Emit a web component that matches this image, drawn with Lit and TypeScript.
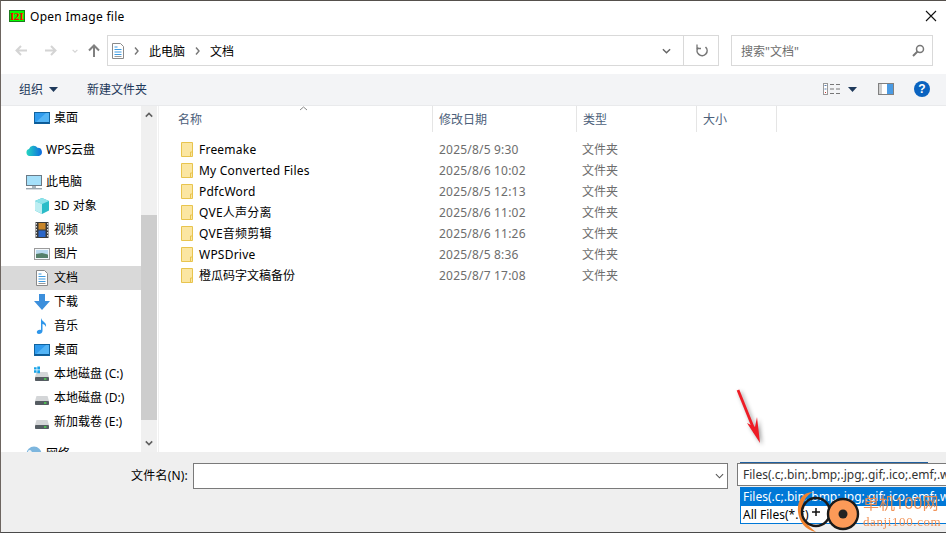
import { LitElement, html, css, svg } from "lit";
import { customElement } from "lit/decorators.js";

const icon = (body: unknown, w = 18, h = 18, cls = "") =>
  html`<svg class=${cls} width=${w} height=${h} viewBox="0 0 ${w} ${h}">${body}</svg>`;

const desktop = svg`<rect x="1.5" y="3.5" width="15" height="11" fill="#2f9bee" stroke="#10639f"/><path d="M2 14 L13 4 H16 V14Z" fill="#53b4f5"/><rect x="2" y="13" width="14" height="1.5" fill="#0c5a96"/>`;
const cloud = svg`<defs><linearGradient id="wg" x1="0" x2="1"><stop offset="0" stop-color="#25d6c0"/><stop offset="1" stop-color="#0e6be0"/></linearGradient></defs><path d="M4.5 15 A3.6 3.6 0 0 1 4 8 A4.8 4.8 0 0 1 12.5 6.8 A4.2 4.2 0 0 1 14 15Z" fill="url(#wg)"/>`;
const pc = svg`<rect x="1.5" y="2.5" width="15" height="10" fill="#7fd0f7" stroke="#6b7a86"/><rect x="2" y="3" width="14" height="9" fill="#a5e0fa"/><rect x="7" y="13" width="4" height="2" fill="#a8b4bc"/><rect x="1" y="15" width="16" height="1.4" fill="#9aa6ae"/>`;
const cube = svg`<path d="M9 1 L16 4 V13.5 L9 17 L2 13.5 V4Z" fill="#2cbcc8"/><path d="M9 1 L16 4 L9 7 L2 4Z" fill="#8fe3ea"/><path d="M2 4 L9 7 V17 L2 13.5Z" fill="#bdeef2"/>`;
const film = svg`<rect x="2.5" y="1" width="13" height="16" fill="#3a3a3a"/><rect x="5.5" y="2" width="7" height="6.5" fill="#c8862a"/><rect x="5.5" y="9.5" width="7" height="6.5" fill="#2a66c8"/><path d="M3.4 2v14M14.6 2v14" stroke="#ddd" stroke-dasharray="1.5 1.5" stroke-width="1.2"/>`;
const picture = svg`<rect x="1.5" y="3.5" width="15" height="11" fill="#f4f8fb" stroke="#9b9b9b"/><rect x="3" y="5" width="12" height="4" fill="#b9d9ee"/><path d="M3 9 L9 8 L15 9.5 V13 H3Z" fill="#55806a"/>`;
const doc = svg`<path d="M3.5 1.5 H11.5 L14.5 4.5 V16.5 H3.5Z" fill="#fff" stroke="#8a8a8a"/><path d="M5.5 5h3M5.5 7.5h7M5.5 10h7M5.5 12.5h7" stroke="#3d9ae0" stroke-width="1"/><path d="M5.5 14.5h7" stroke="#999"/>`;
const down = svg`<path d="M6 1 H12 V8 H17 L9 17 L1 8 H6Z" fill="#3c8fdc"/>`;
const music = svg`<path d="M8 1 C9 5 14 5 13 10 C12.3 7.8 10.6 7.2 9.5 7 V14 C9.5 16 7.5 17 6 17 C4.5 17 3.8 16 3.8 15 C3.8 13.4 6 12.2 8 13Z" fill="#2e96ea"/>`;
const drive = svg`<path d="M3.5 7 H14.5 L16 12 H2Z" fill="#d4d6d8"/><rect x="2" y="12" width="14" height="4" rx=".8" fill="#555c62"/><rect x="11" y="13.3" width="2.4" height="1.4" fill="#4fe04f"/>`;
const driveC = svg`<path d="M3.5 7 H14.5 L16 12 H2Z" fill="#d4d6d8"/><rect x="2" y="12" width="14" height="4" rx=".8" fill="#555c62"/><rect x="11" y="13.3" width="2.4" height="1.4" fill="#4fe04f"/><path d="M1 2.2h2.6v2.4H1zM4.3 1.6H7v3H4.3zM1 5.3h2.6v2.4H1zM4.3 5.3H7v3H4.3z" fill="#19a3e8"/>`;
const globe = svg`<circle cx="9" cy="9" r="7.5" fill="#7db6de"/><path d="M3 6 C6 3 8 8 7 11 C5 12 3 10 3 6Z" fill="#e9f3f9"/>`;

const nav = [
  { i: desktop, t: "桌面", child: true, gap: 8 },
  { i: cloud, t: "WPS云盘", gap: 8 },
  { i: pc, t: "此电脑" },
  { i: cube, t: "3D 对象", child: true },
  { i: film, t: "视频", child: true },
  { i: picture, t: "图片", child: true },
  { i: doc, t: "文档", child: true, sel: true },
  { i: down, t: "下载", child: true },
  { i: music, t: "音乐", child: true },
  { i: desktop, t: "桌面", child: true },
  { i: driveC, t: "本地磁盘 (C:)", child: true },
  { i: drive, t: "本地磁盘 (D:)", child: true },
  { i: drive, t: "新加载卷 (E:)", child: true, gap: 8 },
  { i: globe, t: "网络" },
];

const files = [
  ["Freemake", "2025/8/5 9:30"],
  ["My Converted Files", "2025/8/6 10:02"],
  ["PdfcWord", "2025/8/5 12:13"],
  ["QVE人声分离", "2025/8/6 11:02"],
  ["QVE音频剪辑", "2025/8/6 11:26"],
  ["WPSDrive", "2025/8/5 8:36"],
  ["橙瓜码字文稿备份", "2025/8/7 17:08"],
];

const folder = svg`<path d="M1.5 1.5 H12.5 V15.5 H1.5Z" fill="#fbe6a2" stroke="#e8c44e"/><path d="M10.5 15.5 V11 H12.5" fill="none" stroke="#e8c44e"/>`;
const chev = (w = 10, c = "#666", sw = 1.6) =>
  html`<svg width=${w} height="6" viewBox="0 0 10 6"><path d="M1 1 L5 5 L9 1" fill="none" stroke=${c} stroke-width=${sw}/></svg>`;
const chevUp = (w = 10, c = "#666", sw = 1.6) =>
  html`<svg width=${w} height="6" viewBox="0 0 10 6"><path d="M1 5 L5 1 L9 5" fill="none" stroke=${c} stroke-width=${sw}/></svg>`;
const tri = html`<svg width="9" height="5" viewBox="0 0 9 5"><path d="M0 0H9L4.5 5Z" fill="#1e395b"/></svg>`;
const crumb = html`<svg width="5" height="8" viewBox="0 0 5 8"><path d="M1 .5 L4 4 L1 7.5" fill="none" stroke="#777" stroke-width="1.4"/></svg>`;

@customElement("app-root")
export class AppRoot extends LitElement {
  static styles = css`
    :host { display: block; width: 946px; height: 533px; font-family: "Noto Sans", "Noto Sans CJK SC", sans-serif; font-size: 12px; color: #000; }
    * { box-sizing: border-box; }
    .win { position: relative; width: 946px; height: 533px; display: flex; flex-direction: column; background: #fff; border-left: 1px solid #6d6560; border-top: 1px solid #55504c; border-bottom: 1px solid #4a4a4a; overflow: hidden; }
    .title { height: 31px; display: flex; align-items: center; padding-left: 8px; gap: 5px; flex: none; }
    .logo { width: 16px; height: 12px; background: #00ff00; border: 1px solid #1f7a1f; color: #f00; font: normal 11px/10px "Liberation Serif", serif; font-weight: 700; letter-spacing: -.2px; text-align: center; margin-top: -2px; overflow: hidden; }
    .title .name { flex: 1; font-size: 12px; letter-spacing: .28px; margin-top: -1px; }
    .close { width: 30px; display: flex; justify-content: center; margin-top: -2px; }
    .nav { height: 42px; flex: none; display: flex; align-items: flex-start; padding-top: 3px; }
    .navbtns { width: 106px; height: 31px; display: flex; align-items: center; padding-left: 14px; }
    .navbtns svg { flex: none; }
    .sp18 { width: 18px; }
    .sp15 { width: 15px; }
    .sp10 { width: 10px; }
    .addr { width: 612px; height: 31px; border: 1px solid #d9d9d9; display: flex; align-items: center; }
    .path { flex: 1; display: flex; align-items: center; padding-left: 1px; color: #000; }
    .path .docic { display: flex; margin-right: -3px; }
    .path .seg { display: flex; margin-left: 10px; margin-right: 10px; }
    .ddn { width: 33px; display: flex; justify-content: center; }
    .refresh { width: 35px; height: 29px; border-left: 1px solid #d9d9d9; display: flex; align-items: center; justify-content: center; }
    .search { margin-left: 12px; width: 202px; height: 31px; border: 1px solid #d9d9d9; display: flex; align-items: center; justify-content: space-between; padding: 0 7px 0 9px; color: #6d6d6d; }
    .tools { height: 32px; flex: none; background: #f3f4f6; border-bottom: 1px solid #e9eaec; display: flex; align-items: center; color: #1e395b; padding: 0 0 1px 18px; }
    .tools .org { display: flex; align-items: center; gap: 6px; width: 68px; }
    .tools .spacer { flex: 1; }
    .tools .views { display: flex; align-items: center; gap: 8px; margin-right: 21px; }
    .tools .pane { margin-right: 20px; display: flex; }
    .tools .help { width: 16px; height: 16px; border-radius: 50%; background: #0a63c0; color: #fff; font: bold 12px/16px "Liberation Sans", sans-serif; text-align: center; margin-right: 16px; }
    .main { flex: 1; min-height: 0; display: flex; }
    .side { width: 140px; flex: none; overflow: hidden; }
    .row { height: 24px; display: flex; align-items: center; gap: 3px; padding-left: 24px; white-space: nowrap; }
    .row.child { padding-left: 32px; }
    .row.sel { background: #d9d9d9; }
    .row.gap { margin-bottom: 8px; }
    .row span { margin-top: -2px; }
    .sb { width: 16px; flex: none; background: #f0f0f0; display: flex; flex-direction: column; align-items: center; }
    .sb .btn { height: 18px; flex: none; display: flex; align-items: center; justify-content: center; }
    .sb .t1 { height: 91px; width: 100%; }
    .sb .thumb { height: 205px; width: 100%; background: #cdcdcd; }
    .sb .t2 { flex: 1; width: 100%; }
    .list { flex: 1; min-width: 0; margin-left: 1px; border-left: 1px solid #f0f0f0; display: flex; flex-direction: column; }
    .heads { position: relative; height: 26px; flex: none; display: flex; color: #4c607a; }
    .h { height: 26px; border-right: 1px solid #e5e5e5; padding-left: 6px; display: flex; align-items: center; }
    .h.n { width: 274px; padding-left: 19px; }
    .h.d { width: 144px; }
    .h.ty { width: 120px; }
    .h.s { width: 80px; }
    .sort { position: absolute; left: 140px; top: 0; display: flex; }
    .rows { padding-top: 7px; }
    .f { height: 21px; display: flex; align-items: center; }
    .f .nm { width: 274px; display: flex; align-items: center; gap: 5px; padding-left: 21px; }
    .f .nm .lat { letter-spacing: .22px; }
    .f .nm .cjk { margin-top: -2px; }
    .f .dt { width: 144px; padding-left: 6px; color: #6d6d6d; letter-spacing: .2px; }
    .f .tp { padding-left: 5px; margin-top: -2px; color: #6d6d6d; }
    .foot { height: 80px; flex: none; background: #efefef; display: flex; align-items: flex-start; padding-top: 11px; }
    .lbl { width: 187px; text-align: right; height: 25px; line-height: 25px; letter-spacing: .2px; }
    .inp { margin-left: 5px; width: 535px; height: 26px; border: 1px solid #7a7a7a; background: #fff; display: flex; align-items: center; justify-content: flex-end; padding-right: 3px; }
    .combo { position: absolute; left: 736px; top: 462px; width: 209px; height: 23px; background: #fff; border: 1px solid #7a7a7a; border-right: none; line-height: 22px; padding-left: 5px; white-space: nowrap; overflow: hidden; color: #333; }
    .comboedge { position: absolute; left: 739px; top: 461px; width: 188px; height: 1px; background: #1f5f9e; }
    .drop { position: absolute; left: 739px; top: 486px; width: 206px; height: 37px; background: #fff; border: 1px solid #0078d7; border-right: none; overflow: hidden; white-space: nowrap; }
    .drop div { height: 18px; line-height: 18px; padding-left: 2px; }
    .drop .on { background: #0078d7; color: #fff; }
    .arrow { position: absolute; left: 730px; top: 385px; filter: drop-shadow(2px 2px 2px rgba(0,0,0,.4)); }
    .wm { position: absolute; left: 790px; top: 488px; }
    .wmt { position: absolute; left: 862px; top: 493px; color: #f08a4a; white-space: nowrap; opacity: .92; }
    .wmt .a { font-size: 16px; line-height: 18px; }
    .wmt .b { font-family: "Liberation Serif", serif; font-size: 13px; line-height: 14px; margin-top: 3px; letter-spacing: .6px; }
  `;

  render() {
    return html`<div class="win">
      <div class="title">
        <div class="logo">I2L</div>
        <div class="name">Open Image file</div>
        <div class="close">${icon(svg`<path d="M1 1 L11 11 M11 1 L1 11" stroke="#111" stroke-width="1.1"/>`, 12, 12)}</div>
      </div>
      <div class="nav">
        <div class="navbtns">
          ${icon(svg`<path d="M12 5.5 H2 M6 1 L1.5 5.5 L6 10" fill="none" stroke="#d4d4d4" stroke-width="2"/>`, 12, 11)}
          <span class="sp18"></span>
          ${icon(svg`<path d="M0 5.5 H10 M6 1 L10.5 5.5 L6 10" fill="none" stroke="#d4d4d4" stroke-width="2"/>`, 12, 11)}
          <span class="sp15"></span>
          ${chev(6, "#d4d4d4", 2)}
          <span class="sp10"></span>
          ${icon(svg`<path d="M6 13 V2 M1 6.5 L6 1.5 L11 6.5" fill="none" stroke="#808080" stroke-width="2"/>`, 12, 13)}
        </div>
        <div class="addr">
          <div class="path">
            <span class="docic">${icon(doc, 18, 18)}</span>
            <span class="seg">${crumb}</span><span>此电脑</span>
            <span class="seg">${crumb}</span><span>文档</span>
          </div>
          <div class="ddn">${chev(9, "#666", 1.6)}</div>
          <div class="refresh">${icon(svg`<path d="M10.5 3 A5 5 0 1 1 3.2 3.5" fill="none" stroke="#777" stroke-width="1.6"/><path d="M2 .5 V4.5 H6" fill="none" stroke="#777" stroke-width="1.3"/>`, 13, 14)}</div>
        </div>
        <div class="search">
          <span>搜索"文档"</span>
          ${icon(svg`<circle cx="8" cy="5" r="3.5" fill="none" stroke="#777" stroke-width="1.5"/><path d="M5.5 7.5 L1 12" stroke="#777" stroke-width="2"/>`, 13, 13)}
        </div>
      </div>
      <div class="tools">
        <div class="org"><span>组织</span>${tri}</div>
        <span>新建文件夹</span>
        <div class="spacer"></div>
        <div class="views">
          ${icon(svg`<rect x=".5" y=".5" width="4" height="11" fill="#fff" stroke="#999"/><path d="M1.5 2.5h2M1.5 6h2" stroke="#5a7fb0"/><rect x="2" y="9" width="1" height="1" fill="#c33"/><path d="M7 1.5h4M13 1.5h4M7 6h4M13 6h4M7 10.5h4M13 10.5h4" stroke="#777"/>`, 17, 12)}
          ${tri}
        </div>
        <div class="pane">${icon(svg`<rect x=".5" y=".5" width="15" height="11" fill="#fff" stroke="#808080"/><rect x="9" y="1" width="6" height="10" fill="#4a9be4"/><rect x="1" y="1" width="3" height="10" fill="#cfcfcf"/>`, 16, 12)}</div>
        <div class="help">?</div>
      </div>
      <div class="main">
        <div class="side">
          ${nav.map(
            (r) => html`<div class="row ${r.child ? "child" : ""} ${r.sel ? "sel" : ""} ${r.gap ? "gap" : ""}">${icon(r.i)}<span>${r.t}</span></div>`,
          )}
        </div>
        <div class="sb">
          <div class="btn">${chevUp(8, "#606060", 2)}</div>
          <div class="t1"></div>
          <div class="thumb"></div>
          <div class="t2"></div>
          <div class="btn">${chev(8, "#606060", 2)}</div>
        </div>
        <div class="list">
          <div class="heads">
            <div class="h n">名称</div>
            <div class="h d">修改日期</div>
            <div class="h ty">类型</div>
            <div class="h s">大小</div>
            <div class="sort">${icon(svg`<path d="M1 4 L4.5 1 L8 4" fill="none" stroke="#888"/>`, 9, 5)}</div>
          </div>
          <div class="rows">
            ${files.map(
              ([n, d]) => html`<div class="f"><div class="nm">${icon(folder, 14, 17)}<span class="${/[A-Za-z]/.test(n) ? "lat" : ""} ${/[^\x00-\x7f]/.test(n) ? "cjk" : ""}">${n}</span></div><div class="dt">${d}</div><div class="tp">文件夹</div></div>`,
            )}
          </div>
        </div>
      </div>
      <div class="foot">
        <div class="lbl">文件名(N):</div>
        <div class="inp">${chev(9, "#555", 1.2)}</div>
      </div>
      <div class="comboedge"></div>
      <div class="combo">Files(.c;.bin;.bmp;.jpg;.gif;.ico;.emf;.w</div>
      <div class="drop">
        <div class="on">Files(.c;.bin;.bmp;.jpg;.gif;.ico;.emf;.w</div>
        <div>All Files(*.*)</div>
      </div>
      <svg class="arrow" width="36" height="62" viewBox="0 0 36 62"><path d="M7 4 L24 46" stroke="#ee1c25" stroke-width="2.8"/><path d="M29 57 L16 37 L24 41 L26 31Z" fill="#ee1c25"/></svg>
      <svg class="wm" width="72" height="44" viewBox="0 0 72 44">
        <path d="M22 3 C10 3 6 14 7 23 C8 32 14 41 25 43 C17 37 12 31 11 23 C11 14 14 7 22 3Z" fill="#f0822e"/>
        <circle cx="25" cy="23" r="14" fill="none" stroke="#1a1a1a" stroke-width="2.4"/>
        <path d="M25 19 V27 M21 23 H29" stroke="#111" stroke-width="1.5"/>
        <circle cx="52" cy="25" r="15" fill="#fc9a58" stroke="#1a1a1a" stroke-width="2.4"/>
        <circle cx="52" cy="25" r="4.5" fill="#222"/>
      </svg>
      <div class="wmt"><div class="a">单机100网</div><div class="b">danji100.com</div></div>
    </div>`;
  }
}
